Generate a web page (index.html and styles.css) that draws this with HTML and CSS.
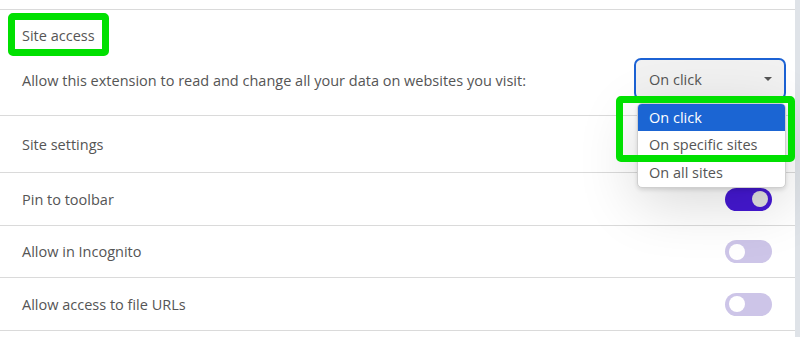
FILE: index.html
```html
<!DOCTYPE html>
<html lang="en">
<head>
  <meta charset="UTF-8">
  <meta name="viewport" content="width=device-width, initial-scale=1.0">
  <title>Extension details</title>
  <link rel="stylesheet" href="styles.css">
</head>
<body>
  <div class="page">
    <div class="panel">
      <div class="top-edge"></div>

      <section class="access">
        <div class="access-title"><span class="mark">Site access</span></div>
        <div class="access-line">
          <span>Allow this extension to read and change all your data on websites you visit:</span>
          <div class="select-wrap">
            <div class="select">On click <span class="caret"></span></div>
            <ul class="menu">
              <li class="selected">On click</li>
              <li>On specific sites</li>
              <li>On all sites</li>
            </ul>
            <div class="mark-box"></div>
          </div>
        </div>
      </section>

      <div class="row row-settings">Site settings</div>
      <div class="row row-pin">
        <span>Pin to toolbar</span>
        <span class="toggle on"></span>
      </div>
      <div class="row row-incognito">
        <span>Allow in Incognito</span>
        <span class="toggle"></span>
      </div>
      <div class="row row-files">
        <span>Allow access to file URLs</span>
        <span class="toggle"></span>
      </div>
    </div>
  </div>
</body>
</html>
```

FILE: styles.css
```css
body {
  margin: 0;
  background-color: #dfe3e8;
  color: #555;
  font-family: "Open Sans", "Noto Sans", sans-serif;
  font-size: 14.5px;
}
.page {
  display: flex;
  height: 337px;
  overflow: hidden;
}
.panel {
  width: 795px;
  background-color: #fff;
}
.top-edge {
  height: 9px;
  border-bottom: 1px solid #dadada;
}
.access {
  position: relative;
  height: 106px;
  box-sizing: border-box;
  padding: 16px 9px 0 22px;
  border-bottom: 1px solid #dadada;
}
.access-title {
  line-height: 20px;
}
.mark {
  position: relative;
}
.mark::after {
  content: "";
  position: absolute;
  left: -14px;
  right: -14px;
  top: -13px;
  bottom: -11px;
  border: 7px solid #00e000;
  border-radius: 5px;
}
.access-line {
  display: flex;
  justify-content: space-between;
  align-items: center;
  margin-top: 12px;
}
.access-line > span {
  padding-top: 3px;
}
.select-wrap {
  position: relative;
}
.select {
  width: 152px;
  height: 42px;
  box-sizing: border-box;
  display: flex;
  align-items: center;
  justify-content: space-between;
  padding: 0 12px 0 13px;
  border: 2px solid #1c62d4;
  border-radius: 7px;
  background-color: #f1f1f1;
}
.caret {
  width: 0;
  height: 0;
  border-left: 4px solid transparent;
  border-right: 4px solid transparent;
  border-top: 4px solid #555;
}
.menu {
  position: absolute;
  left: 3px;
  top: 45px;
  width: 149px;
  margin: 0;
  padding: 0;
  list-style: none;
  box-sizing: border-box;
  background-color: #fff;
  border: 1px solid #cfcfcf;
  border-radius: 5px;
  overflow: hidden;
  box-shadow: 0 14px 60px rgba(0, 0, 0, 0.16), 0 2px 4px rgba(0, 0, 0, 0.12);
  z-index: 2;
}
.menu li {
  height: 28px;
  line-height: 28px;
  padding-left: 11px;
}
.menu li.selected {
  height: 27px;
  line-height: 27px;
  background-color: #1b65d3;
  color: #fff;
}
.mark-box {
  position: absolute;
  left: -18px;
  top: 38px;
  width: 179px;
  height: 66px;
  box-sizing: border-box;
  border: 7px solid #00e000;
  border-radius: 5px;
  z-index: 3;
}
.row {
  display: flex;
  align-items: center;
  justify-content: space-between;
  box-sizing: border-box;
  padding: 0 23px 0 22px;
  border-bottom: 1px solid #dadada;
}
.row-settings {
  height: 57px;
}
.row-pin {
  height: 53px;
}
.row-incognito {
  height: 52px;
}
.row-files {
  height: 53px;
}
.toggle {
  position: relative;
  width: 47px;
  height: 23px;
  border-radius: 12px;
  background-color: #cdc5e8;
}
.toggle::after {
  content: "";
  position: absolute;
  left: 4px;
  top: 3.5px;
  width: 16px;
  height: 16px;
  border-radius: 50%;
  background-color: #fff;
}
.toggle.on {
  background-color: #4518d3;
}
.toggle.on::after {
  left: auto;
  right: 4px;
  background-color: #e0e0e0;
}
```
